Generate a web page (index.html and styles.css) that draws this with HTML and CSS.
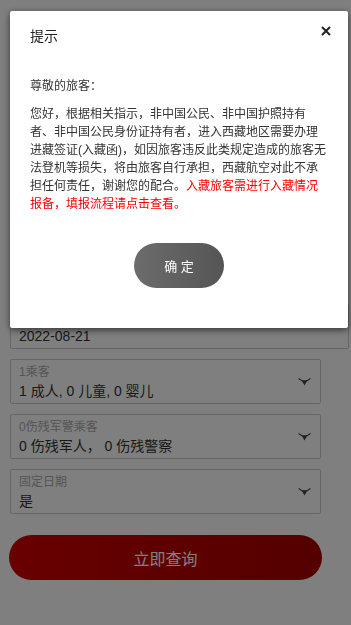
FILE: index.html
```html
<!DOCTYPE html>
<html lang="zh-CN">
<head>
    <meta charset="UTF-8">
    <meta name="viewport" content="width=device-width, initial-scale=1.0">
    <title>航班查询</title>
    <link rel="stylesheet" href="styles.css">
</head>
<body>
    <div class="search">
        <div class="field wide">
            <div class="field-body">
                <p class="label">出发日期</p>
                <p class="value">2022-08-21</p>
            </div>
        </div>
        <div class="field">
            <div class="field-body">
                <p class="label">1乘客</p>
                <p class="value">1 成人, 0 儿童, 0 婴儿</p>
            </div>
            <svg class="arrow" width="13" height="8" viewBox="0 0 13 8"><path d="M0.6 0.6 L6.5 4.4 L12.4 0.6" fill="none" stroke="#444" stroke-width="1.2"/><path d="M3.6 2.2 L9.4 2.2 L6.5 7.6 Z" fill="#444"/></svg>
        </div>
        <div class="field">
            <div class="field-body">
                <p class="label">0伤残军警乘客</p>
                <p class="value">0 伤残军人，&nbsp;0 伤残警察</p>
            </div>
            <svg class="arrow" width="13" height="8" viewBox="0 0 13 8"><path d="M0.6 0.6 L6.5 4.4 L12.4 0.6" fill="none" stroke="#444" stroke-width="1.2"/><path d="M3.6 2.2 L9.4 2.2 L6.5 7.6 Z" fill="#444"/></svg>
        </div>
        <div class="field">
            <div class="field-body">
                <p class="label">固定日期</p>
                <p class="value">是</p>
            </div>
            <svg class="arrow" width="13" height="8" viewBox="0 0 13 8"><path d="M0.6 0.6 L6.5 4.4 L12.4 0.6" fill="none" stroke="#444" stroke-width="1.2"/><path d="M3.6 2.2 L9.4 2.2 L6.5 7.6 Z" fill="#444"/></svg>
        </div>
        <button class="query">立即查询</button>
    </div>

    <div class="mask"></div>
    <div class="dialog">
        <div class="dialog-head">
            <span class="dialog-title">提示</span>
            <svg class="close" width="10" height="10" viewBox="0 0 10 10"><path d="M1 1 L9 9 M9 1 L1 9" stroke="#222" stroke-width="2"/></svg>
        </div>
        <div class="dialog-body">
            <p class="greet">尊敬的旅客：</p>
            <p class="notice">您好，根据相关指示，非中国公民、非中国护照持有者、非中国公民身份证持有者，进入西藏地区需要办理进藏签证(入藏函)，如因旅客违反此类规定造成的旅客无法登机等损失，将由旅客自行承担，西藏航空对此不承担任何责任，谢谢您的配合。<span class="red">入藏旅客需进行入藏情况报备，填报流程请点击查看。</span></p>
        </div>
        <button class="ok">确 定</button>
    </div>
</body>
</html>
```

FILE: styles.css
```css
* {
    box-sizing: border-box;
}
body {
    margin: 0;
    background: #fff;
    font-family: "Liberation Sans", "Noto Sans CJK SC", sans-serif;
    color: #333;
}
p {
    margin: 0;
}

/* form under the mask */
.search {
    padding: 304px 30px 0 10px;
}
.field {
    display: flex;
    align-items: center;
    height: 45px;
    margin-bottom: 10px;
    padding: 4px 9px 0 8px;
    border: 1px solid #ccc;
    border-radius: 2px;
}
.field.wide {
    margin-right: -28px;
}
.field-body {
    flex: 1;
    align-self: flex-start;
}
.label {
    font-size: 12px;
    line-height: 16px;
    color: #aaa;
}
.value {
    font-size: 14px;
    line-height: 22px;
    color: #333;
}
.arrow {
    display: block;
    margin-top: -4px;
}
.query {
    display: block;
    width: 313px;
    height: 45px;
    margin: 21px 0 0 -1px;
    border: none;
    border-radius: 23px;
    background: linear-gradient(to right, #d10000, #a90000);
    color: #fff;
    font-family: inherit;
    font-size: 16px;
}

/* dialog */
.mask {
    position: fixed;
    top: 0;
    left: 0;
    right: 0;
    bottom: 0;
    background: rgba(0, 0, 0, 0.5);
}
.dialog {
    position: fixed;
    top: 11px;
    left: 10px;
    width: 338px;
    padding-bottom: 40px;
    background: #fff;
    border-radius: 2px;
    box-shadow: 0 2px 7px rgba(0, 0, 0, 0.6);
}
.dialog-head {
    display: flex;
    justify-content: space-between;
    align-items: flex-start;
    padding: 15px 17px 0 20px;
}
.dialog-title {
    font-size: 14px;
    line-height: 20px;
    color: #222;
}
.close {
    display: block;
}
.dialog-body {
    padding: 31px 20px 0;
    font-size: 12px;
    line-height: 18px;
    color: #333;
}
.greet {
    margin-bottom: 10px;
}
.red {
    color: #f00;
}
.ok {
    display: block;
    width: 90px;
    height: 45px;
    margin: 30px auto 0;
    border: none;
    border-radius: 23px;
    background: linear-gradient(to right, #6c6c6c, #555);
    color: #fff;
    font-family: inherit;
    font-size: 13px;
}
```
